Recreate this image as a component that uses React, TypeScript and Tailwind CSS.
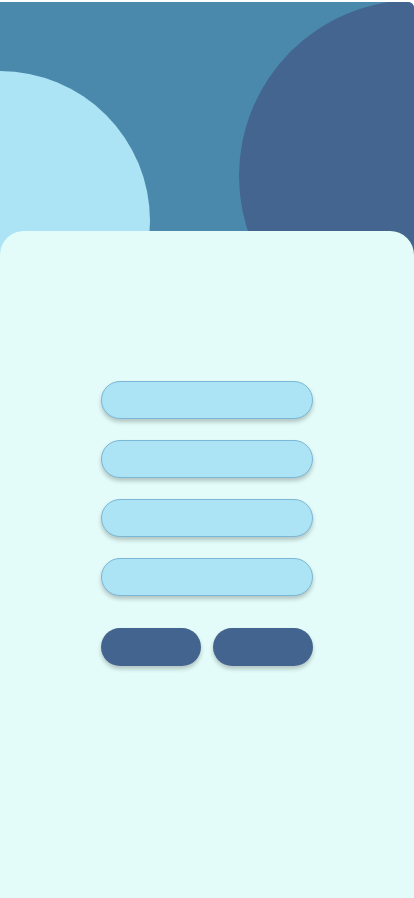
import React from "react";

// ========== Main Component ==========

export default function App() {
  const fields = ["name", "email", "password", "confirm"];

  return (
    <div className="min-h-[898px] w-full bg-white pt-[2px] overflow-hidden font-['Liberation_Sans',sans-serif]">
      {/* Header with decorative circles */}
      <div className="relative h-[253px] overflow-hidden bg-[#4a89ac] rounded-tr-[6px]">
        <div className="absolute left-[-150px] top-[69px] w-[300px] h-[300px] rounded-full bg-[#ace4f5]" />
        <div className="absolute left-[239px] top-[-2px] w-[352px] h-[352px] rounded-full bg-[#44658f]" />
      </div>

      {/* Card */}
      <div className="relative -mt-[24px] h-[667px] rounded-t-[24px] bg-[#e3fcf9] pt-[150px] flex flex-col items-center">
        <div className="flex flex-col gap-[21px]">
          {fields.map((f) => (
            <input
              key={f}
              aria-label={f}
              className="w-[212px] h-[38px] rounded-full bg-[#ace4f5] border border-[#7ab8d6] shadow-[0_3px_4px_rgba(0,0,0,0.22)] outline-none px-4"
            />
          ))}
        </div>
        <div className="mt-[32px] flex gap-[12px]">
          <button className="w-[100px] h-[38px] rounded-full bg-[#43648f] shadow-[0_3px_4px_rgba(0,0,0,0.22)]" />
          <button className="w-[100px] h-[38px] rounded-full bg-[#43648f] shadow-[0_3px_4px_rgba(0,0,0,0.22)]" />
        </div>
      </div>
    </div>
  );
}
